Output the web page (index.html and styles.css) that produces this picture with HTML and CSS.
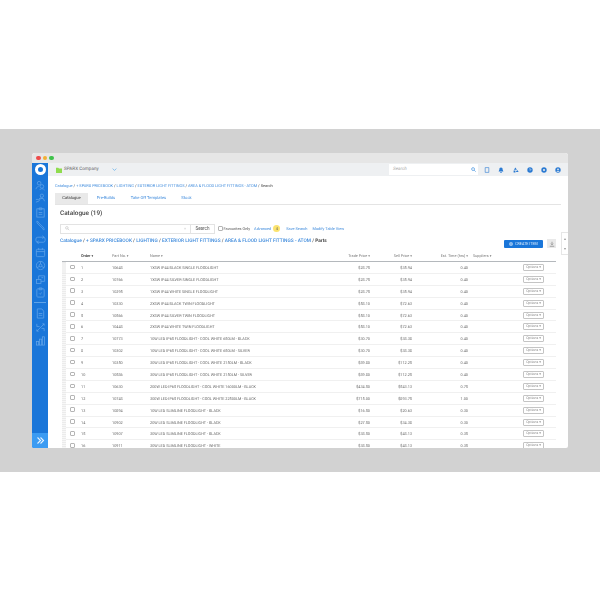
FILE: index.html
```html
<!DOCTYPE html>
<html>
<head>
<meta charset="UTF-8">
<title>Catalogue</title>
<link rel="stylesheet" href="styles.css">
</head>
<body>
<div class="band">
	<div class="window">
		<div class="titlebar">
			<span class="dot red"></span><span class="dot yellow"></span><span class="dot green"></span>
		</div>
		<div class="app">
			<aside class="side">
				<div class="logo"></div>
				<div class="side-icons">
					<svg viewBox="0 0 12 12"><circle cx="4.5" cy="3.5" r="2"/><circle cx="7.5" cy="7" r="2"/><path d="M1 10c.5-2 2-3 3-3M5 11c.5-1 1.500-1.500 2.500-1.500S10 10 10.500 11"/></svg>
					<svg viewBox="0 0 12 12"><circle cx="7.500" cy="3" r="1.800"/><path d="M1 10l3-1 2-3h3l1.500 3M1 7l3 0 2-2"/></svg>
					<svg viewBox="0 0 12 12"><rect x="2" y="2" width="8" height="9"/><path d="M4.500 1h3v2h-3zM4 6h4M4 8h4"/></svg>
					<svg viewBox="0 0 12 12"><path d="M2 3l1-1 7 7-1 1zM1.500 1.500l2 0M8.500 10.500l2 0"/></svg>
					<svg viewBox="0 0 12 12"><rect x="1" y="3.500" width="10" height="5.500" rx="2"/><path d="M8 2l2 1.500-2 1.500M4 7.500l-2 1.500 2 1.500"/></svg>
					<svg viewBox="0 0 12 12"><rect x="1.500" y="2.500" width="9" height="8" rx="1"/><path d="M1.500 5h9M4 1v2M8 1v2"/></svg>
					<svg viewBox="0 0 12 12"><circle cx="6" cy="6" r="4.500"/><circle cx="6" cy="6" r="1.500"/><path d="M6 1.500v3M2 8.500l2.700-1.500M10 8.500L7.300 7"/></svg>
					<svg viewBox="0 0 12 12"><rect x="1.500" y="6" width="5" height="4.500"/><path d="M4 6V2h6.500v6H6.500M7 4h2"/></svg>
					<svg viewBox="0 0 12 12"><rect x="2" y="2" width="8" height="9" rx="1"/><path d="M4.500 1h3v2h-3zM4.500 7l1 1 2-2"/></svg>
				</div>
				<div class="side-rule"></div>
				<div class="side-icons">
					<svg viewBox="0 0 12 12"><path d="M2.500 1h5l2 2.500V11h-7zM4 6h4M4 8h4"/></svg>
					<svg viewBox="0 0 12 12"><path d="M2 10l8-8M2 2v3h3M10 10V7H7M8 2h2v2M2 8v2h2"/></svg>
					<svg viewBox="0 0 12 12"><rect x="1.500" y="7" width="2.500" height="4"/><rect x="4.800" y="4.500" width="2.500" height="6.500"/><rect x="8" y="2" width="2.500" height="9"/></svg>
				</div>
				<div class="side-toggle">
					<svg viewBox="0 0 12 12"><path d="M2 2l4 4-4 4M6 2l4 4-4 4"/></svg>
				</div>
			</aside>
			<div class="main">
				<header class="topbar">
					<div class="company">
						<svg class="folder" viewBox="0 0 8 8"><path d="M0 1h3l1 1h4v6H0z"/></svg>
						<span>SPARX Company</span>
						<svg class="caret" viewBox="0 0 8 8"><path d="M1 2.500l3 3 3-3"/></svg>
					</div>
					<div class="top-search">
						<span>Search</span>
						<svg viewBox="0 0 8 8"><circle cx="3.300" cy="3.300" r="2.300"/><path d="M5 5l2.500 2.500"/></svg>
					</div>
					<div class="top-icons">
						<svg viewBox="0 0 10 10"><path class="line" d="M2 1h6v8H2z"/></svg>
						<svg viewBox="0 0 10 10"><path d="M5 1c2 0 2.800 1.500 2.800 3.500L9 7.500H1l1.200-3C2.200 2.500 3 1 5 1zM4 8.500h2V10H4z"/></svg>
						<svg viewBox="0 0 10 10"><path d="M4 1l2.500 3.500h-5zM7 5l2.500 3.500h-5zM1 6h3v3H1z"/></svg>
						<svg viewBox="0 0 10 10"><circle cx="5" cy="5" r="4.500"/><path class="cut" d="M3.500 3.800C3.800 2.800 6.500 2.800 6.500 4.200 6.500 5.200 5 5 5 6.200"/></svg>
						<svg viewBox="0 0 10 10"><circle cx="5" cy="5" r="4.500"/><circle class="hole" cx="5" cy="5" r="1.700"/></svg>
						<svg viewBox="0 0 10 10"><circle cx="5" cy="5" r="4.500"/><circle class="hole" cx="5" cy="3.800" r="1.400"/><path class="hole" d="M2.500 7.800C3 6 7 6 7.500 7.800z"/></svg>
					</div>
				</header>
				<div class="content">
					<div class="crumbs"><a>Catalogue</a> / <a>+ SPARX PRICEBOOK</a> / <a>LIGHTING</a> / <a>EXTERIOR LIGHT FITTINGS</a> / <a>AREA &amp; FLOOD LIGHT FITTINGS - ATOM</a> / Search</div>
					<nav class="tabs">
						<a class="tab active">Catalogue</a>
						<a class="tab">Pre-Builds</a>
						<a class="tab">Take Off Templates</a>
						<a class="tab">Stock</a>
					</nav>
					<div class="panel">
						<h2>Catalogue (19)</h2>
						<div class="filters">
							<div class="search-box">
								<svg viewBox="0 0 8 8"><circle cx="3.300" cy="3.300" r="2.300"/><path d="M5 5l2.500 2.500"/></svg>
								<span class="clear">×</span>
							</div>
							<button class="search-btn">Search</button>
							<span class="check"></span>
							<span class="fav">Favourites Only</span>
							<a class="advanced">Advanced</a>
							<span class="badge">4</span>
							<a class="save">Save Search</a>
							<a>Modify Table View</a>
						</div>
						<div class="path-row">
							<div class="path"><a>Catalogue</a> / <a>+ SPARX PRICEBOOK</a> / <a>LIGHTING</a> / <a>EXTERIOR LIGHT FITTINGS</a> / <a>AREA &amp; FLOOD LIGHT FITTINGS - ATOM</a> / <b>Parts</b></div>
							<button class="create"><svg viewBox="0 0 8 8"><circle cx="4" cy="4" r="4"/><path d="M4 2v4M2 4h4"/></svg>CREATE ITEM</button>
							<button class="download"><svg viewBox="0 0 8 8"><path d="M4 1v4M2.500 3.500L4 5l1.500-1.500M1 7h6"/></svg></button>
						</div>
						<table class="parts">
							<colgroup>
								<col class="c-grip"><col class="c-check"><col class="c-order"><col class="c-part"><col class="c-name">
								<col class="c-trade"><col class="c-sell"><col class="c-time"><col class="c-sup"><col class="c-opt">
							</colgroup>
							<thead>
								<tr>
									<th></th><th></th>
									<th class="dark">Order <i>▾</i></th><th>Part No. <i>▾</i></th><th>Name <i>▾</i></th>
									<th class="num">Trade Price <i>▾</i></th><th class="num">Sell Price <i>▾</i></th><th class="num">Est. Time (hrs) <i>▾</i></th><th class="sup">Suppliers <i>▾</i></th><th></th>
								</tr>
							</thead>
							<tbody>
								<tr><td class="grip"></td><td class="box"><span class="check"></span></td><td>1</td><td>10648</td><td>1X8W IP44 BLACK SINGLE FLOODLIGHT</td><td class="num">$28.75</td><td class="num">$35.94</td><td class="num">0.40</td><td></td><td><span class="opt">Options <i>▾</i></span></td></tr>
								<tr><td class="grip"></td><td class="box"><span class="check"></span></td><td>2</td><td>10766</td><td>1X8W IP44 SILVER SINGLE FLOODLIGHT</td><td class="num">$28.75</td><td class="num">$35.94</td><td class="num">0.40</td><td></td><td><span class="opt">Options <i>▾</i></span></td></tr>
								<tr><td class="grip"></td><td class="box"><span class="check"></span></td><td>3</td><td>10295</td><td>1X8W IP44 WHITE SINGLE FLOODLIGHT</td><td class="num">$28.75</td><td class="num">$35.94</td><td class="num">0.40</td><td></td><td><span class="opt">Options <i>▾</i></span></td></tr>
								<tr><td class="grip"></td><td class="box"><span class="check"></span></td><td>4</td><td>10330</td><td>2X8W IP44 BLACK TWIN FLOODLIGHT</td><td class="num">$58.10</td><td class="num">$72.63</td><td class="num">0.40</td><td></td><td><span class="opt">Options <i>▾</i></span></td></tr>
								<tr><td class="grip"></td><td class="box"><span class="check"></span></td><td>5</td><td>10566</td><td>2X8W IP44 SILVER TWIN FLOODLIGHT</td><td class="num">$58.10</td><td class="num">$72.63</td><td class="num">0.40</td><td></td><td><span class="opt">Options <i>▾</i></span></td></tr>
								<tr><td class="grip"></td><td class="box"><span class="check"></span></td><td>6</td><td>10448</td><td>2X8W IP44 WHITE TWIN FLOODLIGHT</td><td class="num">$58.10</td><td class="num">$72.63</td><td class="num">0.40</td><td></td><td><span class="opt">Options <i>▾</i></span></td></tr>
								<tr><td class="grip"></td><td class="box"><span class="check"></span></td><td>7</td><td>10773</td><td>10W LED IP65 FLOODLIGHT - COOL WHITE 650LM - BLACK</td><td class="num">$30.70</td><td class="num">$38.38</td><td class="num">0.40</td><td></td><td><span class="opt">Options <i>▾</i></span></td></tr>
								<tr><td class="grip"></td><td class="box"><span class="check"></span></td><td>8</td><td>10302</td><td>10W LED IP65 FLOODLIGHT - COOL WHITE 650LM - SILVER</td><td class="num">$30.70</td><td class="num">$38.38</td><td class="num">0.40</td><td></td><td><span class="opt">Options <i>▾</i></span></td></tr>
								<tr><td class="grip"></td><td class="box"><span class="check"></span></td><td>9</td><td>10350</td><td>30W LED IP65 FLOODLIGHT - COOL WHITE 2150LM - BLACK</td><td class="num">$89.80</td><td class="num">$112.25</td><td class="num">0.40</td><td></td><td><span class="opt">Options <i>▾</i></span></td></tr>
								<tr><td class="grip"></td><td class="box"><span class="check"></span></td><td>10</td><td>10586</td><td>30W LED IP65 FLOODLIGHT - COOL WHITE 2150LM - SILVER</td><td class="num">$89.80</td><td class="num">$112.25</td><td class="num">0.40</td><td></td><td><span class="opt">Options <i>▾</i></span></td></tr>
								<tr><td class="grip"></td><td class="box"><span class="check"></span></td><td>11</td><td>10630</td><td>200W LED IP65 FLOODLIGHT - COOL WHITE 16000LM - BLACK</td><td class="num">$434.50</td><td class="num">$543.13</td><td class="num">0.75</td><td></td><td><span class="opt">Options <i>▾</i></span></td></tr>
								<tr><td class="grip"></td><td class="box"><span class="check"></span></td><td>12</td><td>10748</td><td>300W LED IP65 FLOODLIGHT - COOL WHITE 22500LM - BLACK</td><td class="num">$715.00</td><td class="num">$893.75</td><td class="num">1.00</td><td></td><td><span class="opt">Options <i>▾</i></span></td></tr>
								<tr><td class="grip"></td><td class="box"><span class="check"></span></td><td>13</td><td>10894</td><td>10W LED SLIMLINE FLOODLIGHT - BLACK</td><td class="num">$16.50</td><td class="num">$20.63</td><td class="num">0.30</td><td></td><td><span class="opt">Options <i>▾</i></span></td></tr>
								<tr><td class="grip"></td><td class="box"><span class="check"></span></td><td>14</td><td>10902</td><td>20W LED SLIMLINE FLOODLIGHT - BLACK</td><td class="num">$27.50</td><td class="num">$34.38</td><td class="num">0.30</td><td></td><td><span class="opt">Options <i>▾</i></span></td></tr>
								<tr><td class="grip"></td><td class="box"><span class="check"></span></td><td>15</td><td>10907</td><td>30W LED SLIMLINE FLOODLIGHT - BLACK</td><td class="num">$38.50</td><td class="num">$48.13</td><td class="num">0.35</td><td></td><td><span class="opt">Options <i>▾</i></span></td></tr>
								<tr><td class="grip"></td><td class="box"><span class="check"></span></td><td>16</td><td>10911</td><td>30W LED SLIMLINE FLOODLIGHT - WHITE</td><td class="num">$38.50</td><td class="num">$48.13</td><td class="num">0.35</td><td></td><td><span class="opt">Options <i>▾</i></span></td></tr>
							</tbody>
						</table>
					</div>
					<div class="scroll-tab"><span>▴</span><span>▾</span></div>
				</div>
			</div>
		</div>
	</div>
</div>
</body>
</html>
```

FILE: styles.css
```css
* {
	margin: 0;
	padding: 0;
	box-sizing: border-box;
}
html, body {
	height: 600px;
	overflow: hidden;
	background: #fff;
}
body {
	padding-top: 129px;
	font-family: "Roboto", "Liberation Sans", sans-serif;
	font-size: 4px;
	color: #555;
	text-rendering: geometricPrecision;
}
a {
	color: #3f8bdc;
}
button {
	font-family: inherit;
	border: none;
}

/* gray band behind the window */
.band {
	height: 343px;
	padding: 24px 32px 0;
	background: #d2d2d2;
}
.window {
	height: 295px;
	display: flex;
	flex-direction: column;
	overflow: hidden;
	border-radius: 3px 3px 2px 2px;
	background: #fff;
	filter: blur(.35px);
}
.titlebar {
	height: 10px;
	flex: none;
	display: flex;
	align-items: center;
	gap: 2px;
	padding-left: 4px;
	background: #e6e6e6;
}
.dot {
	width: 4.500px;
	height: 4.500px;
	border-radius: 50%;
}
.red { background: #ee4b4b; }
.yellow { background: #f2b033; }
.green { background: #3fc24b; }

.app {
	flex: 1;
	display: flex;
	min-height: 0;
}

/* sidebar */
.side {
	width: 16px;
	flex: none;
	display: flex;
	flex-direction: column;
	align-items: center;
	background: #1a76d9;
}
.logo {
	width: 11px;
	height: 11px;
	margin: 1px 0 5px;
	border: 3px solid #fff;
	border-radius: 50%;
	background: #1a76d9;
}
.side-icons {
	display: flex;
	flex-direction: column;
	align-items: center;
	gap: 2.400px;
}
.side-icons svg {
	width: 11px;
	height: 11px;
	fill: none;
	stroke: #64a6ea;
	stroke-width: .8;
}
.side-rule {
	width: 12px;
	height: 1px;
	margin: 4px 0 5px;
	background: #5fa3e8;
}
.side-toggle {
	width: 16px;
	height: 15px;
	margin-top: auto;
	display: flex;
	align-items: center;
	justify-content: center;
	background: #3b9bf2;
}
.side-toggle svg {
	width: 9px;
	height: 9px;
	fill: none;
	stroke: #e4f1fe;
	stroke-width: 1.500;
}

.main {
	flex: 1;
	min-width: 0;
	display: flex;
	flex-direction: column;
}

/* top bar */
.topbar {
	height: 13px;
	flex: none;
	display: flex;
	align-items: center;
	background: #eef0f2;
}
.company {
	width: 341px;
	display: flex;
	align-items: center;
	padding-left: 8px;
	font-size: 4.600px;
	color: #666;
}
.folder {
	width: 6px;
	height: 6px;
	margin-right: 2px;
	fill: #8fdc4e;
}
.caret {
	width: 5px;
	height: 5px;
	margin-left: 13px;
	fill: none;
	stroke: #4aa3e8;
}
.top-search {
	width: 89px;
	height: 11px;
	display: flex;
	align-items: center;
	justify-content: space-between;
	padding: 0 2px 0 4px;
	background: #fff;
	font-size: 4.600px;
	font-style: italic;
	color: #aaa;
}
.top-search svg {
	width: 5px;
	height: 5px;
	fill: none;
	stroke: #2f86dc;
	stroke-width: 1;
}
.top-icons {
	display: flex;
	align-items: center;
	gap: 8.300px;
	padding-left: 6px;
}
.top-icons svg {
	width: 6px;
	height: 6px;
	fill: #2b7ad2;
}
.top-icons .line {
	fill: none;
	stroke: #2b7ad2;
}
.top-icons .hole {
	fill: #eef0f2;
}
.top-icons .cut {
	fill: none;
	stroke: #eef0f2;
}

/* content */
.content {
	position: relative;
	flex: 1;
	min-height: 0;
	overflow: hidden;
	padding: 7px 7px 0;
}
.crumbs {
	height: 10px;
	line-height: 5px;
	font-size: 3.900px;
	color: #444;
}
.tabs {
	display: flex;
	height: 12px;
	align-items: center;
	border-bottom: 1px solid #e4e4e4;
	font-size: 4.100px;
}
.tab {
	height: 11px;
	line-height: 11px;
	width: 36px;
	text-align: center;
}
.tab.active {
	width: 33px;
	background: #e9e9e9;
	color: #333;
}
.tab:nth-child(3) {
	width: 49px;
}
.tab:nth-child(4) {
	width: 27px;
}
.panel {
	padding: 4px 5px 0;
}
h2 {
	height: 10px;
	line-height: 9px;
	font-size: 6.400px;
	font-weight: 500;
	color: #444;
}
.filters {
	display: flex;
	align-items: center;
	height: 11px;
	margin-top: 4px;
	font-size: 3.900px;
}
.search-box {
	width: 130px;
	height: 10px;
	display: flex;
	align-items: center;
	justify-content: space-between;
	padding: 0 4px;
	border: 1px solid #e3e3e3;
	border-right: none;
}
.search-box svg {
	width: 4.500px;
	height: 4.500px;
	fill: none;
	stroke: #aaa;
	stroke-width: .8;
}
.clear {
	color: #bbb;
}
.search-btn {
	width: 25px;
	height: 10px;
	border: 1px solid #e3e3e3;
	background: #fff;
	font-size: 4.600px;
	color: #555;
}
.check {
	display: inline-block;
	width: 4.500px;
	height: 4.500px;
	border: .7px solid #b5b5b5;
	border-radius: 1px;
	background: #fff;
}
.filters .check {
	margin: 0 1px 0 3px;
}
.advanced {
	margin-left: 4px;
}
.badge {
	width: 7px;
	height: 7px;
	line-height: 7px;
	margin: 0 6px 0 2px;
	border-radius: 50%;
	background: #fbe36e;
	text-align: center;
	color: #555;
}
.save {
	margin-right: 5px;
}
.path-row {
	display: flex;
	align-items: flex-end;
	height: 12px;
	margin-top: 2px;
}
.path {
	flex: 1;
	align-self: flex-start;
	line-height: 11px;
	font-size: 4.800px;
	font-weight: 500;
	color: #555;
}
.path b {
	font-weight: 700;
	color: #444;
}
.create {
	width: 39px;
	height: 8px;
	display: flex;
	align-items: center;
	justify-content: center;
	gap: 2px;
	border-radius: 1px;
	background: #1a76d9;
	font-size: 3.700px;
	color: #d5e8fb;
}
.create svg {
	width: 4px;
	height: 4px;
	fill: #d5e8fb;
	stroke: #1a76d9;
	stroke-width: 1;
}
.download {
	width: 9px;
	height: 9px;
	margin-left: 4px;
	display: flex;
	align-items: center;
	justify-content: center;
	background: #e9e9e9;
}
.download svg {
	width: 6px;
	height: 6px;
	fill: none;
	stroke: #888;
}

/* table */
.parts {
	width: 494px;
	table-layout: fixed;
	border-collapse: collapse;
	margin: 2px 0 0 2px;
}
.c-grip { width: 4px; }
.c-check { width: 15px; }
.c-order { width: 31px; }
.c-part { width: 38px; }
.c-name { width: 177px; }
.c-trade { width: 43px; }
.c-sell { width: 42px; }
.c-time { width: 56px; }
.c-sup { width: 43px; }
.c-opt { width: 45px; }
th {
	height: 11.500px;
	border-bottom: 1.500px solid #b4b8bc;
	text-align: left;
	font-size: 3.800px;
	font-weight: 400;
	color: #777;
}
th.dark {
	font-weight: 500;
	color: #333;
}
th i, .opt i {
	font-style: normal;
	font-size: 3.400px;
}
th.sup {
	padding-left: 5px;
}
td {
	height: 11.900px;
	padding: 0;
	border-bottom: 1px solid #f0f0f0;
	font-size: 3.800px;
	color: #666;
	white-space: nowrap;
}
.box {
	padding-left: 4px;
}
.num {
	text-align: right;
}
.grip {
	border-bottom: none;
	background: repeating-linear-gradient(#ebebeb 0, #ebebeb 1px, #f7f7f7 1px, #f7f7f7 2px);
}
.opt {
	display: block;
	width: 21px;
	height: 7px;
	line-height: 5.800px;
	margin-left: 12px;
	border: .7px solid #c4c4c4;
	border-radius: 1px;
	text-align: center;
	font-size: 3.500px;
	color: #888;
}
.scroll-tab {
	position: absolute;
	right: 0;
	top: 56px;
	width: 7px;
	height: 23px;
	display: flex;
	flex-direction: column;
	justify-content: space-around;
	align-items: center;
	border: 1px solid #e6e6e6;
	border-right: none;
	font-size: 4px;
	color: #999;
}
```
